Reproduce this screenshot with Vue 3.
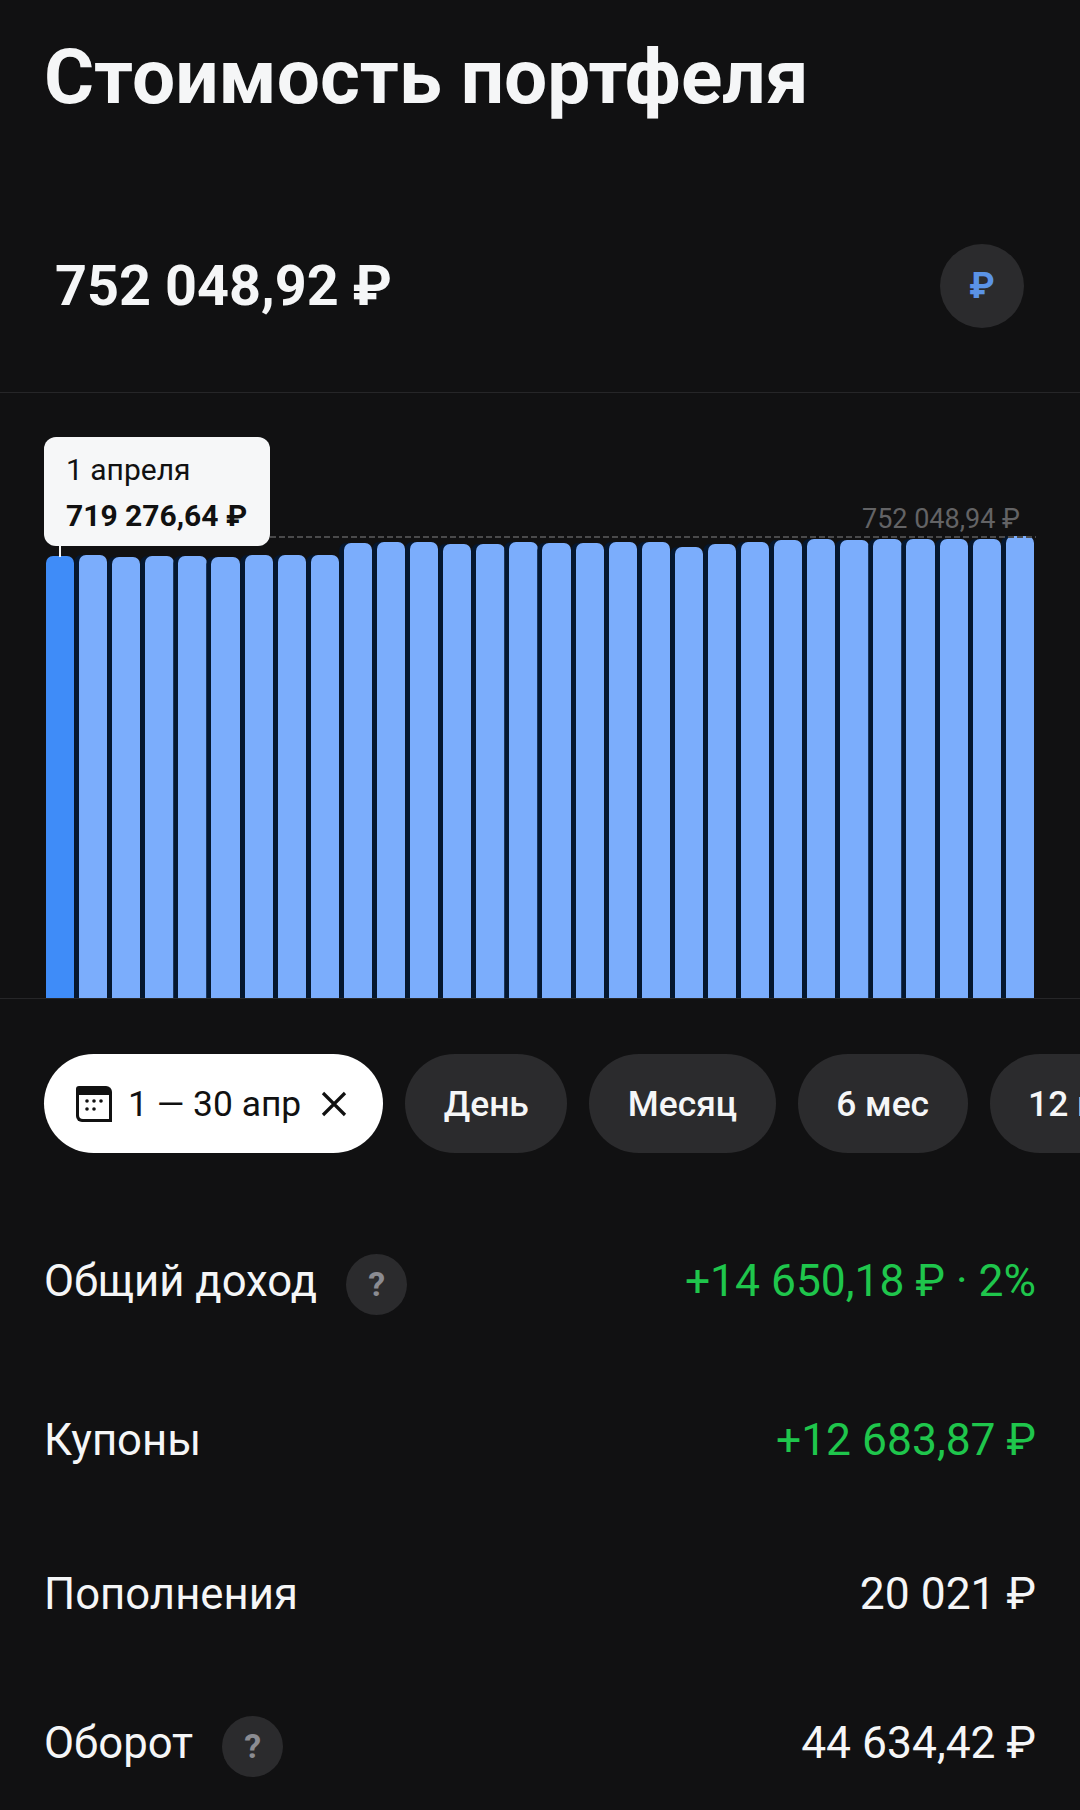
<script setup>
// top edge of each bar, in px from the top of the page
const tops = [
  556, 555, 557, 556, 556, 557, 555, 555, 555, 543,
  542, 542, 544, 544, 542, 543, 543, 542, 542, 547,
  544, 542, 540, 539, 540, 539, 539, 539, 539, 536
]
const bars = tops.map((top) => 998 - top)

const periods = ['День', 'Месяц', '6 мес', '12 мес']

const rows = [
  { label: 'Общий доход', value: '+14 650,18 ₽ · 2%', green: true, help: true, cls: 'row-income' },
  { label: 'Купоны', value: '+12 683,87 ₽', green: true, cls: 'row-coupons' },
  { label: 'Пополнения', value: '20 021 ₽', cls: 'row-topup' },
  { label: 'Оборот', value: '44 634,42 ₽', help: true, cls: 'row-turnover' }
]
</script>

<template>
  <div class="screen">
    <h1 class="title">Стоимость портфеля</h1>

    <div class="summary">
      <span class="amount">752 048,92 ₽</span>
      <button class="currency">₽</button>
    </div>

    <div class="chart">
      <div class="bars">
        <div
          v-for="(h, i) in bars"
          :key="i"
          class="bar"
          :class="{ active: i === 0 }"
          :style="{ height: h + 'px' }"
        ></div>
      </div>

      <!-- overlays -->
      <div class="max-line"></div>
      <span class="max-label">752 048,94 ₽</span>
      <div class="stem"></div>
      <div class="tooltip">
        <div class="tooltip-date">1 апреля</div>
        <div class="tooltip-value">719 276,64 ₽</div>
      </div>
    </div>

    <div class="chips">
      <button class="chip chip-active">
        <svg class="cal" viewBox="0 0 36 36" width="36" height="36">
          <path d="M3 0h27a6 6 0 0 1 6 6v30H6a6 6 0 0 1-6-6V3a3 3 0 0 1 3-3z" fill="#111"/>
          <path d="M3 9h30v24H7a4 4 0 0 1-4-4z" fill="#fff"/>
          <g fill="#111">
            <circle cx="11" cy="15" r="1.8"/>
            <circle cx="18" cy="15" r="1.8"/>
            <circle cx="25" cy="15" r="1.8"/>
            <circle cx="11" cy="23" r="1.8"/>
            <circle cx="18" cy="23" r="1.8"/>
          </g>
        </svg>
        <span>1 — 30 апр</span>
        <svg class="close" viewBox="0 0 26 26" width="26" height="26">
          <path d="M2 2l22 22M24 2L2 24" stroke="#111" stroke-width="3.2" fill="none"/>
        </svg>
      </button>
      <button v-for="p in periods" :key="p" class="chip">{{ p }}</button>
    </div>

    <div v-for="r in rows" :key="r.label" class="row" :class="r.cls">
      <div class="row-label">
        <span>{{ r.label }}</span>
        <span v-if="r.help" class="help">?</span>
      </div>
      <span class="row-value" :class="{ green: r.green }">{{ r.value }}</span>
    </div>
  </div>
</template>

<style>
html, body {
  margin: 0;
  background: #111112;
}
</style>

<style scoped>
.screen {
  width: 1080px;
  height: 1810px;
  overflow: hidden;
  background: #111112;
  color: #f5f6f7;
  font-family: Roboto, "Noto Sans", sans-serif;
}

.title {
  margin: 0;
  padding: 30px 0 0 44px;
  height: 110px;
  font-size: 76.6px;
  line-height: 94px;
  font-weight: 700;
  box-sizing: content-box;
}

.summary {
  display: flex;
  align-items: center;
  justify-content: space-between;
  height: 84px;
  margin-top: 104px;
  padding: 0 56px 0 55px;
}

.amount {
  font-size: 55.8px;
  font-weight: 700;
}

.currency {
  width: 84px;
  height: 84px;
  border: 0;
  border-radius: 50%;
  background: #2b2b2d;
  color: #5b93e6;
  font-family: Roboto, sans-serif;
  font-size: 36px;
  font-weight: 700;
}

.chart {
  position: relative;
  height: 605px;
  margin-top: 64px;
  border-top: 1px solid #262628;
  border-bottom: 1px solid #262628;
}

.bars {
  position: absolute;
  left: 46px;
  right: 46px;
  bottom: 0;
  display: flex;
  align-items: flex-end;
  gap: 4.8px;
}

.bar {
  flex: 1;
  background: #7badfc;
  border-radius: 7px 7px 0 0;
}

.bar + .bar {
  box-shadow: -4.8px 0 0 #05172f;
}

.bar.active {
  background: #3f8cf8;
}

.max-line {
  position: absolute;
  left: 270px;
  right: 44px;
  top: 143px;
  height: 2px;
  background: repeating-linear-gradient(90deg, #4a4a4b 0 6px, transparent 6px 9px);
}

.max-label {
  position: absolute;
  right: 60px;
  top: 110px;
  font-size: 27px;
  color: #636365;
}

.stem {
  position: absolute;
  left: 59px;
  top: 150px;
  width: 2px;
  height: 14px;
  background: #f5f6f7;
}

.tooltip {
  position: absolute;
  left: 44px;
  top: 44px;
  width: 226px;
  height: 109px;
  box-sizing: border-box;
  padding: 13px 22px;
  background: #f6f7f8;
  border-radius: 12px;
  color: #111;
}

.tooltip-date {
  font-size: 30px;
  line-height: 40px;
}

.tooltip-value {
  margin-top: 6px;
  font-size: 30px;
  line-height: 40px;
  font-weight: 700;
}

.chips {
  display: flex;
  gap: 22px;
  margin-top: 55px;
  padding-left: 44px;
}

.chip {
  flex: none;
  height: 99px;
  padding: 0 38.5px;
  border: 0;
  border-radius: 50px;
  background: #2b2b2d;
  color: #f5f6f7;
  font-family: Roboto, sans-serif;
  font-size: 35.4px;
  font-weight: 500;
}

.chip-active {
  display: flex;
  align-items: center;
  gap: 16px;
  padding: 0 36px 0 32px;
  background: #fff;
  color: #111;
  font-weight: 400;
}

.close {
  margin-left: 4px;
}

.row {
  display: flex;
  align-items: center;
  justify-content: space-between;
  padding: 0 44px;
  height: 62px;
}

.row-income { margin-top: 97px; }
.row-coupons { margin-top: 97px; }
.row-topup { margin-top: 92px; }
.row-turnover { margin-top: 87px; }

.row-label {
  display: flex;
  align-items: center;
  gap: 29px;
  font-size: 43.7px;
}

.row-value {
  font-size: 44.4px;
}

.green {
  color: #1fc64c;
}

.help {
  display: flex;
  align-items: center;
  justify-content: center;
  width: 61px;
  height: 61px;
  margin-top: 6px;
  border-radius: 50%;
  background: #2b2b2d;
  color: #8b8c92;
  font-size: 34px;
  font-weight: 700;
}
</style>
